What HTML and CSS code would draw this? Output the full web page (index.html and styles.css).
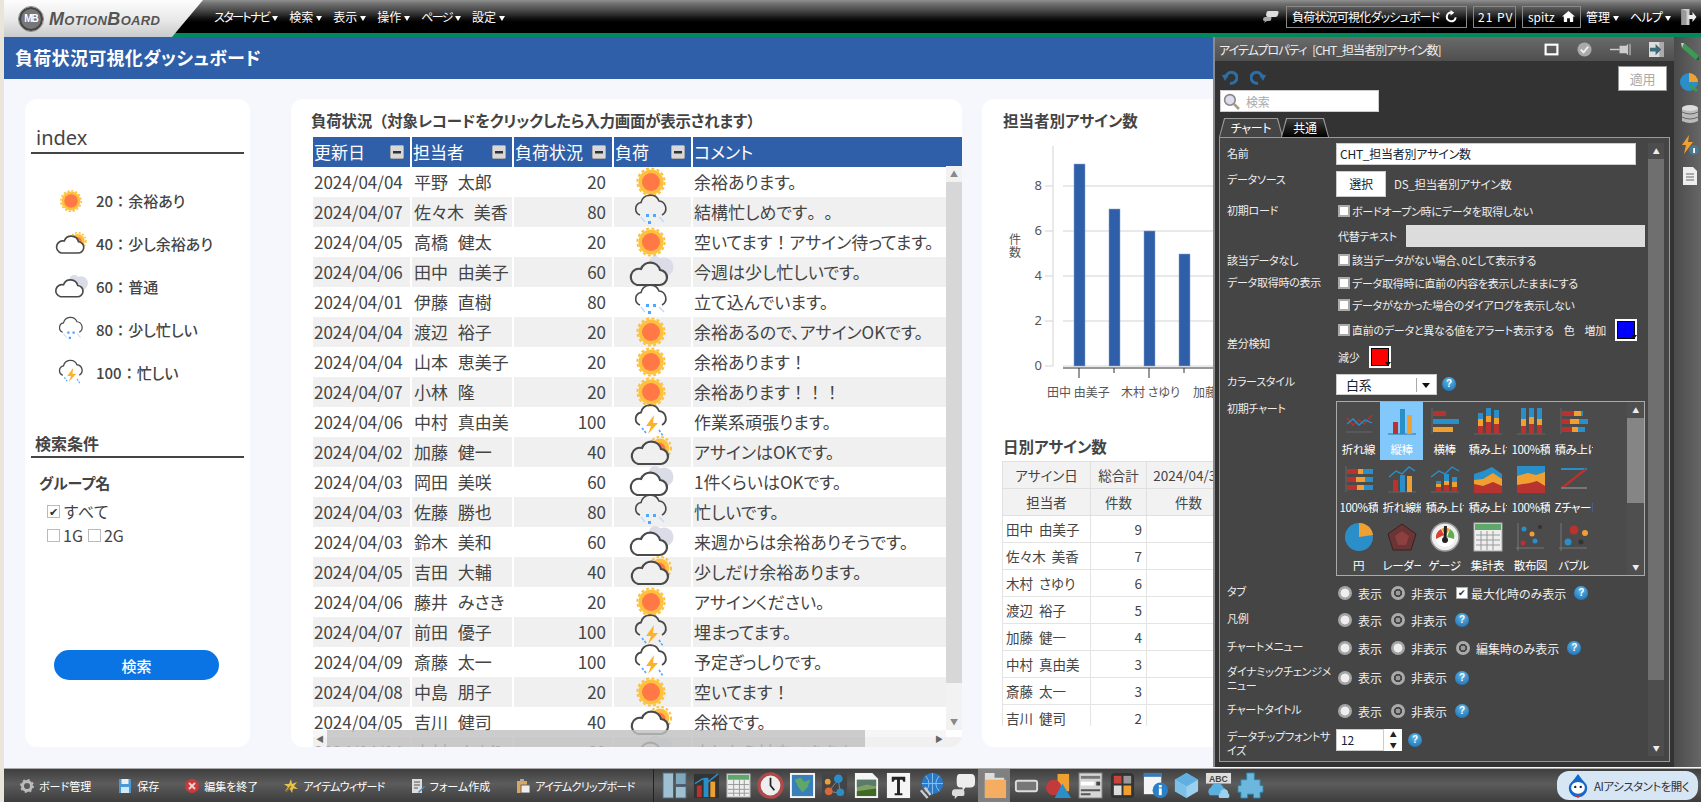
FILE: index.html
```html
<!DOCTYPE html>
<html lang="ja">
<head>
<meta charset="utf-8">
<title>負荷状況可視化ダッシュボード</title>
<link rel="stylesheet" href="styles.css">
</head>
<body>
<svg class="defs" aria-hidden="true">
  <defs>
    <symbol id="sun" viewBox="0 0 48 48"><circle cx="24" cy="24" r="12.6" fill="#fdc13f"/><circle cx="24" cy="24" r="13.6" fill="none" stroke="#fdc13f" stroke-width="2" stroke-dasharray="3 2.34"/><circle cx="24" cy="24" r="9" fill="#ff7845"/></symbol>
    <symbol id="partly" viewBox="0 0 48 48"><circle cx="33" cy="20" r="9.4" fill="#fdc13f"/><circle cx="33" cy="20" r="11" fill="none" stroke="#fdc13f" stroke-width="2" stroke-dasharray="2.6 2.2"/><circle cx="32" cy="21" r="6.4" fill="#ff7845"/><path d="M11 36H33A7.5 7.5 0 0 0 34 21A10 10 0 0 0 15 20A8 8 0 0 0 11 36Z" fill="currentColor" stroke="#4a4a4a" stroke-width="2.2"/></symbol>
    <symbol id="cloud" viewBox="0 0 48 48"><circle cx="37" cy="19" r="9.5" fill="#dadce8"/><circle cx="28" cy="14" r="6" fill="#dadce8"/><path d="M10 37H32A7.5 7.5 0 0 0 33 22A10 10 0 0 0 14 21A8 8 0 0 0 10 37Z" fill="currentColor" stroke="#4a4a4a" stroke-width="2.2"/></symbol>
    <symbol id="rain" viewBox="0 0 48 48"><path d="M13 27A6.5 6.5 0 0 1 14 14.500A9.500 9.500 0 0 1 32 13A7.500 7.500 0 0 1 35 27" fill="none" stroke="#4a4a4a" stroke-width="1.600"/><g fill="#4da6ff"><rect x="19" y="26" width="3" height="3"/><rect x="26" y="26" width="3" height="3"/><rect x="21" y="33" width="3" height="3"/></g><g stroke="#bcdcff" stroke-width="1.400"><path d="M14 29l4 5M32 29l5 5"/></g></symbol>
    <symbol id="storm" viewBox="0 0 48 48"><path d="M13 27A6.500 6.500 0 0 1 14 14.500A9.500 9.500 0 0 1 32 13A7.500 7.500 0 0 1 35 27" fill="none" stroke="#4a4a4a" stroke-width="1.800"/><path d="M27 17L19 28H24L21 36L31 25H26Z" fill="#fbb32c"/><g stroke="#4da6ff" stroke-width="1.600" stroke-dasharray="2.500 1.500"><path d="M15 30l4 5M32 32l4 6"/></g></symbol>
    <symbol id="minus" viewBox="0 0 14 14"><rect x=".5" y=".5" width="13" height="13" rx="1" fill="#d8d8d8" stroke="#aaa"/><rect x="3" y="6" width="8" height="2.500" fill="#333"/></symbol>
    <symbol id="t1" viewBox="0 0 30 30"><path d="M2 26H28" stroke="#666"/><path d="M3 12L9 19L15 14L20 18L28 9" fill="none" stroke="#b8322f" stroke-width="1.300"/><path d="M3 18L9 13L15 19L21 14L28 17" fill="none" stroke="#2a8fc8" stroke-width="1.300"/></symbol>
    <symbol id="t2" viewBox="0 0 30 30"><path d="M1 28H29" stroke="#2a6f9f"/><rect x="6" y="16" width="5" height="12" fill="#b8322f"/><rect x="13" y="3" width="5" height="25" fill="#2a8fc8"/><rect x="20" y="9" width="5" height="19" fill="#f0a030"/></symbol>
    <symbol id="t3" viewBox="0 0 30 30"><path d="M2 2V28" stroke="#666"/><rect x="3" y="5" width="13" height="5" fill="#b8322f"/><rect x="3" y="13" width="26" height="5" fill="#2a8fc8"/><rect x="3" y="21" width="20" height="5" fill="#f0a030"/></symbol>
    <symbol id="t4" viewBox="0 0 30 30"><path d="M1 28H29" stroke="#666"/><g fill="#b8322f"><rect x="5" y="20" width="5" height="8"/><rect x="13" y="16" width="5" height="12"/><rect x="21" y="18" width="5" height="10"/></g><g fill="#f0a030"><rect x="5" y="13" width="5" height="7"/><rect x="13" y="10" width="5" height="6"/><rect x="21" y="12" width="5" height="6"/></g><g fill="#2a8fc8"><rect x="5" y="7" width="5" height="6"/><rect x="13" y="2" width="5" height="8"/><rect x="21" y="4" width="5" height="8"/></g></symbol>
    <symbol id="t5" viewBox="0 0 30 30"><path d="M1 28H29" stroke="#666"/><g fill="#b8322f"><rect x="5" y="20" width="5" height="8"/><rect x="13" y="18" width="5" height="10"/><rect x="21" y="19" width="5" height="9"/></g><g fill="#f0a030"><rect x="5" y="13" width="5" height="7"/><rect x="13" y="11" width="5" height="7"/><rect x="21" y="13" width="5" height="6"/></g><g fill="#2a8fc8"><rect x="5" y="2" width="5" height="11"/><rect x="13" y="2" width="5" height="9"/><rect x="21" y="2" width="5" height="11"/></g></symbol>
    <symbol id="t6" viewBox="0 0 30 30"><path d="M2 2V28" stroke="#666"/><g fill="#b8322f"><rect x="3" y="5" width="12" height="5"/><rect x="3" y="13" width="8" height="5"/><rect x="3" y="21" width="10" height="5"/></g><g fill="#f0a030"><rect x="15" y="5" width="7" height="5"/><rect x="11" y="13" width="9" height="5"/><rect x="13" y="21" width="6" height="5"/></g><g fill="#2a8fc8"><rect x="20" y="13" width="9" height="5"/><rect x="19" y="21" width="7" height="5"/><rect x="22" y="5" width="2" height="5"/></g></symbol>
    <symbol id="t7" viewBox="0 0 30 30"><path d="M2 2V28" stroke="#666"/><g fill="#b8322f"><rect x="3" y="5" width="11" height="5"/><rect x="3" y="13" width="9" height="5"/><rect x="3" y="21" width="10" height="5"/></g><g fill="#f0a030"><rect x="14" y="5" width="5" height="5"/><rect x="12" y="13" width="9" height="5"/><rect x="13" y="21" width="7" height="5"/></g><g fill="#2a8fc8"><rect x="19" y="5" width="10" height="5"/><rect x="21" y="13" width="8" height="5"/><rect x="20" y="21" width="9" height="5"/></g></symbol>
    <symbol id="t8" viewBox="0 0 30 30"><path d="M1 28H29" stroke="#666"/><rect x="6" y="16" width="5" height="12" fill="#b8322f"/><rect x="13" y="11" width="5" height="17" fill="#2a8fc8"/><rect x="20" y="12" width="5" height="16" fill="#f0a030"/><path d="M2 13L9 7L15 10L22 3L28 7" fill="none" stroke="#2a8fc8" stroke-width="1.400"/></symbol>
    <symbol id="t9" viewBox="0 0 30 30"><path d="M1 28H29" stroke="#666"/><g fill="#b8322f"><rect x="6" y="23" width="5" height="5"/><rect x="14" y="21" width="5" height="7"/><rect x="22" y="23" width="5" height="5"/></g><g fill="#f0a030"><rect x="6" y="20" width="5" height="3"/><rect x="14" y="17" width="5" height="4"/><rect x="22" y="18" width="5" height="5"/></g><g fill="#2a8fc8"><rect x="6" y="17" width="5" height="3"/><rect x="14" y="10" width="5" height="7"/><rect x="22" y="13" width="5" height="5"/></g><path d="M1 13L9 7L15 10L22 3L29 7" fill="none" stroke="#2a8fc8" stroke-width="1.400"/></symbol>
    <symbol id="t10" viewBox="0 0 30 30"><path d="M1 10L10 7L19 3L29 10V18H1Z" fill="#2a8fc8"/><path d="M1 16L10 15L20 9L29 15V22H1Z" fill="#f0a030"/><path d="M1 20L10 22L20 18L29 22V29H1Z" fill="#b8322f"/></symbol>
    <symbol id="t11" viewBox="0 0 30 30"><rect x="1" y="2" width="28" height="27" fill="#2a8fc8"/><path d="M1 12L12 9L20 11L29 8V29H1Z" fill="#f0a030"/><path d="M1 21L14 19L21 17L29 22V29H1Z" fill="#b8322f"/></symbol>
    <symbol id="t12" viewBox="0 0 30 30"><path d="M2 5H28" stroke="#2a8fc8" stroke-width="2"/><path d="M27 5L3 24" stroke="#b8322f" stroke-width="2.400"/><path d="M2 24H28" stroke="#777" stroke-width="2"/></symbol>
    <symbol id="t13" viewBox="0 0 30 30"><circle cx="15" cy="15" r="14" fill="#2a8fc8"/><path d="M15 15V1A14 14 0 0 1 29 13Z" fill="#f0a030"/></symbol>
    <symbol id="t14" viewBox="0 0 30 30"><path d="M15 2L29 12L24 28H6L1 12Z" fill="#6b3535" stroke="#3a2020"/><path d="M15 9L22 14L19 23H11L8 14Z" fill="#8c4040"/></symbol>
    <symbol id="t15" viewBox="0 0 30 30"><circle cx="15" cy="15" r="14" fill="#eee" stroke="#999" stroke-width="1.500"/><circle cx="15" cy="15" r="10" fill="#fff"/><path d="M6 17A9 9 0 0 1 11 7L14 13Z" fill="#d8432f"/><path d="M11 7A9 9 0 0 1 20 7L16 13Z" fill="#f0a030"/><path d="M20 7A9 9 0 0 1 24 17L17 15Z" fill="#5fae4a"/><path d="M14 4L17 4L16.500 17H13.500Z" fill="#222"/><circle cx="15" cy="18" r="3" fill="#222"/></symbol>
    <symbol id="t16" viewBox="0 0 30 30"><rect x="1" y="1" width="28" height="28" fill="#eee" stroke="#aaa"/><rect x="2" y="2" width="26" height="6" fill="#5da86a"/><path d="M3 13H27M3 18H27M3 23H27M8 9V28M14 9V28M20 9V28" stroke="#999" fill="none"/></symbol>
    <symbol id="t17" viewBox="0 0 30 30"><path d="M2 1V29M0 26H28" stroke="#777"/><circle cx="8" cy="7" r="2.500" fill="#2a8fc8"/><circle cx="24" cy="5" r="2" fill="#333"/><circle cx="16" cy="12" r="2.500" fill="#f0a030"/><circle cx="7" cy="21" r="2.500" fill="#b8322f"/><circle cx="19" cy="19" r="2.500" fill="#2a8fc8"/></symbol>
    <symbol id="t18" viewBox="0 0 30 30"><path d="M2 1V29M0 26H28" stroke="#777"/><circle cx="15" cy="8" r="4.500" fill="#b8322f"/><circle cx="26" cy="11" r="3" fill="#f0a030"/><circle cx="9" cy="20" r="3.500" fill="#2a8fc8"/><circle cx="22" cy="20" r="2.500" fill="#333"/></symbol>
  </defs>
</svg>

<div class="app">
  <header class="topbar">
    <div class="logo">
      <span class="logo-mark">MB</span>
      <span class="logo-text"><span class="cap">M</span>OTION<span class="cap">B</span>OARD</span>
    </div>
    <nav class="menu">
      <span class="kana">スタートナビ<i class="caret"></i></span>
      <span>検索<i class="caret"></i></span>
      <span>表示<i class="caret"></i></span>
      <span>操作<i class="caret"></i></span>
      <span class="kana">ページ<i class="caret"></i></span>
      <span>設定<i class="caret"></i></span>
    </nav>
    <div class="top-right">
      <svg class="top-chat" viewBox="0 0 16 14"><path d="M5 1H14Q16 1 15.500 3L14.500 6Q14 7 12 7H7L4 9L5 7Q3 7 3 5L3.500 2.500Q4 1 5 1Z" fill="#ddd"/><path d="M2 7H8Q9 8 8 10Q8 11 6 11H4L1 13L2 11Q0 11 0 9.500Q0 7 2 7Z" fill="#aaa"/></svg>
      <div class="top-box board"><span class="board-name">負荷状況可視化ダッシュボード</span>
        <svg class="top-ic" viewBox="0 0 14 14"><path d="M11.500 8A4.800 4.800 0 1 1 7 2.600" fill="none" stroke="#fff" stroke-width="2.200"/><path d="M6 0V6L10 3Z" fill="#fff"/></svg>
      </div>
      <div class="top-box pv">21 PV</div>
      <div class="top-box user">spitz
        <svg class="top-ic" viewBox="0 0 14 14"><path d="M7 1L0 7H2V13H5.500V9H8.500V13H12V7H14Z" fill="#fff"/></svg>
      </div>
      <span class="top-link admin">管理<i class="caret"></i></span>
      <span class="top-link help-link">ヘルプ<i class="caret"></i></span>
      <svg class="top-exit" viewBox="0 0 16 18"><path d="M1 1H9V17H1Z" fill="#ccc"/><path d="M1 1L6 3V17H1Z" fill="#999"/><path d="M8 7H12V4L16 9L12 14V11H8Z" fill="#eee"/></svg>
    </div>
  </header>

  <div class="workspace">
    <h1 class="page-title">負荷状況可視化ダッシュボード</h1>
    <main class="content">
      <aside class="card side">
        <h2 class="side-title">index</h2>
        <ul class="legend">
          <li><svg class="legend-ic"><use href="#sun"/></svg><span>20<span class="fw">&#xFF1A;</span>余裕あり</span></li>
          <li><svg class="legend-ic"><use href="#partly"/></svg><span>40<span class="fw">&#xFF1A;</span>少し余裕あり</span></li>
          <li><svg class="legend-ic"><use href="#cloud"/></svg><span>60<span class="fw">&#xFF1A;</span>普通</span></li>
          <li><svg class="legend-ic"><use href="#rain"/></svg><span>80<span class="fw">&#xFF1A;</span>少し忙しい</span></li>
          <li><svg class="legend-ic"><use href="#storm"/></svg><span>100<span class="fw">&#xFF1A;</span>忙しい</span></li>
        </ul>
        <h3 class="cond-title">検索条件</h3>
        <div class="group-name">グループ名</div>
        <div class="opt-row"><span class="tick">✔</span>すべて</div>
        <div class="opt-row"><span class="tick"></span>1G<span class="tick second"></span>2G</div>
        <button class="search-btn">検索</button>
      </aside>

      <section class="card list">
        <h3 class="card-title">負荷状況<span class="fw">&#xFF08;</span>対象レコードをクリックしたら入力画面が表示されます<span class="fw">&#xFF09;</span></h3>
        <div class="table-wrap">
          <table class="load-table">
            <colgroup><col class="c1"><col class="c2"><col class="c3"><col class="c4"><col class="c5"></colgroup>
            <thead>
              <tr>
                <th>更新日<svg class="mini"><use href="#minus"/></svg></th>
                <th>担当者<svg class="mini"><use href="#minus"/></svg></th>
                <th>負荷状況<svg class="mini"><use href="#minus"/></svg></th>
                <th>負荷<svg class="mini"><use href="#minus"/></svg></th>
                <th>コメント</th>
              </tr>
            </thead>
            <tbody>
              <tr><td>2024/04/04</td><td class="nm">平野 太郎</td><td class="num">20</td><td><svg class="wx"><use href="#sun"/></svg></td><td class="cm">余裕あります。</td></tr>
              <tr><td>2024/04/07</td><td class="nm">佐々木 美香</td><td class="num">80</td><td><svg class="wx"><use href="#rain"/></svg></td><td class="cm">結構忙しめです<span class="fw">。。</span></td></tr>
              <tr><td>2024/04/05</td><td class="nm">高橋 健太</td><td class="num">20</td><td><svg class="wx"><use href="#sun"/></svg></td><td class="cm">空いてます<span class="fw">&#xFF01;</span>アサイン待ってます。</td></tr>
              <tr><td>2024/04/06</td><td class="nm">田中 由美子</td><td class="num">60</td><td><svg class="wx"><use href="#cloud"/></svg></td><td class="cm">今週は少し忙しいです。</td></tr>
              <tr><td>2024/04/01</td><td class="nm">伊藤 直樹</td><td class="num">80</td><td><svg class="wx"><use href="#rain"/></svg></td><td class="cm">立て込んでいます。</td></tr>
              <tr><td>2024/04/04</td><td class="nm">渡辺 裕子</td><td class="num">20</td><td><svg class="wx"><use href="#sun"/></svg></td><td class="cm">余裕あるので、アサインOKです。</td></tr>
              <tr><td>2024/04/04</td><td class="nm">山本 恵美子</td><td class="num">20</td><td><svg class="wx"><use href="#sun"/></svg></td><td class="cm">余裕あります<span class="fw">&#xFF01;</span></td></tr>
              <tr><td>2024/04/07</td><td class="nm">小林 隆</td><td class="num">20</td><td><svg class="wx"><use href="#sun"/></svg></td><td class="cm">余裕あります<span class="fw">&#xFF01;&#xFF01;&#xFF01;</span></td></tr>
              <tr><td>2024/04/06</td><td class="nm">中村 真由美</td><td class="num">100</td><td><svg class="wx"><use href="#storm"/></svg></td><td class="cm">作業系頑張ります。</td></tr>
              <tr><td>2024/04/02</td><td class="nm">加藤 健一</td><td class="num">40</td><td><svg class="wx"><use href="#partly"/></svg></td><td class="cm">アサインはOKです。</td></tr>
              <tr><td>2024/04/03</td><td class="nm">岡田 美咲</td><td class="num">60</td><td><svg class="wx"><use href="#cloud"/></svg></td><td class="cm">1件くらいはOKです。</td></tr>
              <tr><td>2024/04/03</td><td class="nm">佐藤 勝也</td><td class="num">80</td><td><svg class="wx"><use href="#rain"/></svg></td><td class="cm">忙しいです。</td></tr>
              <tr><td>2024/04/03</td><td class="nm">鈴木 美和</td><td class="num">60</td><td><svg class="wx"><use href="#cloud"/></svg></td><td class="cm">来週からは余裕ありそうです。</td></tr>
              <tr><td>2024/04/05</td><td class="nm">吉田 大輔</td><td class="num">40</td><td><svg class="wx"><use href="#partly"/></svg></td><td class="cm">少しだけ余裕あります。</td></tr>
              <tr><td>2024/04/06</td><td class="nm">藤井 みさき</td><td class="num">20</td><td><svg class="wx"><use href="#sun"/></svg></td><td class="cm">アサインください。</td></tr>
              <tr><td>2024/04/07</td><td class="nm">前田 優子</td><td class="num">100</td><td><svg class="wx"><use href="#storm"/></svg></td><td class="cm">埋まってます。</td></tr>
              <tr><td>2024/04/09</td><td class="nm">斎藤 太一</td><td class="num">100</td><td><svg class="wx"><use href="#storm"/></svg></td><td class="cm">予定ぎっしりです。</td></tr>
              <tr><td>2024/04/08</td><td class="nm">中島 朋子</td><td class="num">20</td><td><svg class="wx"><use href="#sun"/></svg></td><td class="cm">空いてます<span class="fw">&#xFF01;</span></td></tr>
              <tr><td>2024/04/05</td><td class="nm">吉川 健司</td><td class="num">40</td><td><svg class="wx"><use href="#partly"/></svg></td><td class="cm">余裕です。</td></tr>
              <tr><td>2024/04/04</td><td class="nm">木村 さゆり</td><td class="num">60</td><td><svg class="wx"><use href="#cloud"/></svg></td><td class="cm">少しなら対応できます。</td></tr>
            </tbody>
          </table>
          <div class="vbar"><span class="vbar-up">▲</span><span class="vbar-thumb"></span><span class="vbar-down">▼</span></div>
          <div class="hbar"><span class="hbar-l">◀</span><span class="hbar-thumb"></span><span class="hbar-r">▶</span></div>
        </div>
      </section>

      <section class="card right">
        <h3 class="card-title chart-head">担当者別アサイン数</h3>
        <svg class="bar-chart" viewBox="0 0 260 270">
          <g class="grid-lines"><path d="M61 17V237"/><path d="M53 237H61M53 192H61M53 147H61M53 102H61M53 57H61"/><path d="M71 237H260M71 192H260M71 147H260M71 102H260M71 57H260"/></g>
          <g class="ytext"><text x="50" y="241">0</text><text x="50" y="196">2</text><text x="50" y="151">4</text><text x="50" y="106">6</text><text x="50" y="61">8</text></g>
          <text class="axis-name" x="23" y="115">件</text><text class="axis-name" x="23" y="128">数</text>
          <g class="bars"><rect x="82" y="35" width="11" height="202"/><rect x="117" y="80" width="11" height="157"/><rect x="152" y="102" width="11" height="135"/><rect x="187" y="125" width="11" height="112"/><rect x="222" y="147" width="11" height="90"/></g>
          <path class="x-axis" d="M71 239H260M87 239V249M122 239V244M157 239V249M192 239V244M227 239V249"/>
          <g class="xtext"><text x="55" y="268">田中 由美子</text><text x="129" y="268">木村 さゆり</text><text x="201" y="268">加藤 健一</text></g>
        </svg>
        <h3 class="card-title daily-head">日別アサイン数</h3>
        <div class="pivot-wrap">
          <table class="pivot">
            <colgroup><col class="p1"><col class="p2"><col class="p3"><col class="p4"></colgroup>
            <thead>
              <tr><th>アサイン日</th><th>総合計</th><th>2024/04/30</th><th>2024/05/01</th></tr>
              <tr><th>担当者</th><th>件数</th><th>件数</th><th>件数</th></tr>
            </thead>
            <tbody>
              <tr><td>田中 由美子</td><td class="pn">9</td><td></td><td></td></tr>
              <tr><td>佐々木 美香</td><td class="pn">7</td><td></td><td></td></tr>
              <tr><td>木村 さゆり</td><td class="pn">6</td><td></td><td></td></tr>
              <tr><td>渡辺 裕子</td><td class="pn">5</td><td></td><td></td></tr>
              <tr><td>加藤 健一</td><td class="pn">4</td><td></td><td></td></tr>
              <tr><td>中村 真由美</td><td class="pn">3</td><td></td><td></td></tr>
              <tr><td>斎藤 太一</td><td class="pn">3</td><td></td><td></td></tr>
              <tr><td>吉川 健司</td><td class="pn">2</td><td></td><td></td></tr>
            </tbody>
          </table>
        </div>
      </section>
    </main>

    <aside class="panel">
      <div class="panel-title">
        <span class="panel-name">アイテムプロパティ [CHT_担当者別アサイン数]</span>
        <span class="panel-icons">
          <svg class="pt" viewBox="0 0 14 14"><rect x="1.500" y="2.500" width="11" height="9" fill="none" stroke="#fff" stroke-width="2"/></svg>
          <svg class="pt" viewBox="0 0 16 16"><circle cx="8" cy="8" r="7.500" fill="#aaa"/><path d="M4 8L7 11L12 5" fill="none" stroke="#eee" stroke-width="2"/></svg>
          <svg class="pt wide" viewBox="0 0 22 14"><path d="M0 7H10" stroke="#ccc" stroke-width="1.500"/><path d="M10 3H17L19 1V13L17 11H10Z" fill="#ccc"/><rect x="20" y="1" width="2" height="12" fill="#999"/></svg>
          <svg class="pt" viewBox="0 0 16 16"><rect x="0" y="0" width="16" height="16" fill="#ddd"/><rect x="11" y="0" width="5" height="16" fill="#aaa"/><path d="M1 6H7V2L13 8L7 14V10H1Z" fill="#3c6a78"/></svg>
        </span>
      </div>
      <div class="panel-tools">
        <div class="tools-row">
          <svg class="undo" viewBox="0 0 16 16"><path d="M4 9A5.500 5.500 0 1 1 8 14" fill="none" stroke="#2c6fa8" stroke-width="3"/><path d="M0 6L7 5L3 12Z" fill="#2c6fa8"/></svg>
          <svg class="undo" viewBox="0 0 16 16"><path d="M12 9A5.500 5.500 0 1 0 8 14" fill="none" stroke="#2c6fa8" stroke-width="3"/><path d="M16 6L9 5L13 12Z" fill="#2c6fa8"/></svg>
          <span class="apply">適用</span>
        </div>
        <div class="search-box">
          <svg class="lens" viewBox="0 0 16 16"><circle cx="6.500" cy="6.500" r="5" fill="#dde" stroke="#888" stroke-width="1.500"/><path d="M10 10L15 15" stroke="#a98" stroke-width="2.500"/></svg>検索
        </div>
      </div>
      <div class="tabs">
        <span class="tab active">チャート</span>
        <span class="tab other">共通</span>
      </div>
      <div class="prop-box">
        <div class="props">
          <div class="lb up8">名前</div>
          <div class="val start"><span class="in name-in">CHT_担当者別アサイン数</span></div>
          <div class="lb up12">データソース</div>
          <div class="val start"><span class="sel-btn">選択</span><span class="ds">DS_担当者別アサイン数</span></div>
          <div class="lb">初期ロード</div>
          <div class="val ck"><i class="box"></i>ボードオープン時にデータを取得しない</div>
          <div class="lb"></div>
          <div class="val ck alt">代替テキスト<span class="alt-in"></span></div>
          <div class="lb">該当データなし</div>
          <div class="val ck"><i class="box"></i>該当データがない場合、0として表示する</div>
          <div class="lb">データ取得時の表示</div>
          <div class="val ck"><i class="box"></i>データ取得時に直前の内容を表示したままにする</div>
          <div class="lb"></div>
          <div class="val ck"><i class="box"></i>データがなかった場合のダイアログを表示しない</div>
          <div class="lb">差分検知</div>
          <div class="val diff">
            <div class="ck"><i class="box"></i>直前のデータと異なる値をアラート表示する<span class="diff-color">色</span><span class="diff-inc">増加</span><i class="swatch blue"></i></div>
            <div class="ck dec">減少<i class="swatch red"></i></div>
          </div>
          <div class="lb up6">カラースタイル</div>
          <div class="val"><span class="select">白系<i class="sel-arrow"></i></span><i class="help sel-help">?</i></div>
          <div class="lb top">初期チャート</div>
          <div class="val">
            <div class="gallery">
              <div class="gal-grid">
                <div class="gc"><svg><use href="#t1"/></svg><span>折れ線</span></div>
                <div class="gc sel"><svg><use href="#t2"/></svg><span>縦棒</span></div>
                <div class="gc"><svg><use href="#t3"/></svg><span>横棒</span></div>
                <div class="gc"><svg><use href="#t4"/></svg><span>積み上げ縦棒</span></div>
                <div class="gc"><svg><use href="#t5"/></svg><span>100%積み上げ</span></div>
                <div class="gc"><svg><use href="#t6"/></svg><span>積み上げ横棒</span></div>
                <div class="gc"><svg><use href="#t7"/></svg><span>100%積み上げ</span></div>
                <div class="gc"><svg><use href="#t8"/></svg><span>折れ線縦棒</span></div>
                <div class="gc"><svg><use href="#t9"/></svg><span>積み上げ折れ線</span></div>
                <div class="gc"><svg><use href="#t10"/></svg><span>積み上げ面</span></div>
                <div class="gc"><svg><use href="#t11"/></svg><span>100%積み上げ</span></div>
                <div class="gc"><svg><use href="#t12"/></svg><span>Zチャート</span></div>
                <div class="gc"><svg><use href="#t13"/></svg><span>円</span></div>
                <div class="gc"><svg><use href="#t14"/></svg><span>レーダー</span></div>
                <div class="gc"><svg><use href="#t15"/></svg><span>ゲージ</span></div>
                <div class="gc"><svg><use href="#t16"/></svg><span>集計表</span></div>
                <div class="gc"><svg><use href="#t17"/></svg><span>散布図</span></div>
                <div class="gc"><svg><use href="#t18"/></svg><span>バブル</span></div>
              </div>
              <div class="gal-bar"><span class="sb-a">▲</span><span class="gal-thumb"></span><span class="sb-a end">▼</span></div>
            </div>
          </div>
          <div class="lb">タブ</div>
          <div class="val rd"><i class="radio on"></i>表示<i class="radio"></i>非表示<i class="box checked">✔</i>最大化時のみ表示<i class="help">?</i></div>
          <div class="lb">凡例</div>
          <div class="val rd"><i class="radio on"></i>表示<i class="radio"></i>非表示<i class="help">?</i></div>
          <div class="lb">チャートメニュー</div>
          <div class="val rd"><i class="radio on"></i>表示<i class="radio on"></i>非表示<i class="radio"></i>編集時のみ表示<i class="help">?</i></div>
          <div class="lb tight">ダイナミックチェンジメ<br>ニュー</div>
          <div class="val rd rd-up"><i class="radio on"></i>表示<i class="radio"></i>非表示<i class="help">?</i></div>
          <div class="lb">チャートタイトル</div>
          <div class="val rd"><i class="radio on"></i>表示<i class="radio"></i>非表示<i class="help">?</i></div>
          <div class="lb tight low">データチップフォントサ<br>イズ</div>
          <div class="val"><span class="spin-in">12</span><span class="spin"><b>▲</b><b>▼</b></span><i class="help">?</i></div>
        </div>
        <div class="prop-bar"><span class="sb-a">▲</span><span class="prop-thumb"></span><span class="sb-a end">▼</span></div>
      </div>
    </aside>

    <div class="rail">
      <svg viewBox="0 0 20 20"><path d="M4 1L19 14L16 18L2 6Z" fill="#3d9a55"/><path d="M1 1L4 1L2 6Z" fill="#ccc"/><path d="M16 18L19 14L19 18Z" fill="#1f5c30"/></svg>
      <svg viewBox="0 0 20 20"><circle cx="9" cy="9" r="9" fill="#2a8fc8"/><path d="M9 9V0A9 9 0 0 1 18 9Z" fill="#f0a030"/><path d="M10 11L18 17L16 19L9 13Z" fill="#3d9a55"/></svg>
      <svg viewBox="0 0 20 20"><path d="M2 4V17Q10 21 18 17V4" fill="#bbb"/><ellipse cx="10" cy="4" rx="8" ry="3" fill="#ddd"/><path d="M2 8Q10 12 18 8M2 13Q10 17 18 13" fill="none" stroke="#666"/></svg>
      <svg viewBox="0 0 20 20"><path d="M9 0L2 10H6L4 19L13 7H8Z" fill="#f0a030"/><circle cx="14" cy="15" r="5" fill="#4a7a90"/><rect x="13.200" y="13" width="1.800" height="5" fill="#fff"/></svg>
      <svg viewBox="0 0 20 20"><path d="M3 1H13L17 5V19H3Z" fill="#eee"/><path d="M6 8H14M6 11H14M6 14H14" stroke="#666"/></svg>
    </div>
  </div>

  <footer class="bottombar">
    <div class="bb-left">
      <span class="bb-btn first"><svg viewBox="0 0 14 14"><circle cx="7" cy="7" r="4.500" fill="none" stroke="#bbb" stroke-width="3"/><circle cx="7" cy="7" r="6" fill="none" stroke="#bbb" stroke-width="2" stroke-dasharray="2 2.700"/></svg>ボード管理</span>
      <span class="bb-btn"><svg viewBox="0 0 14 14"><rect x="1" y="0" width="12" height="14" fill="#4a9ad8"/><rect x="3.500" y="0" width="7" height="5" fill="#eee"/><rect x="3" y="8" width="8" height="6" fill="#d5e8f5"/></svg>保存</span>
      <span class="bb-btn"><svg viewBox="0 0 14 14"><circle cx="7" cy="7" r="7" fill="#c8393a"/><path d="M4 4L10 10M10 4L4 10" stroke="#f3d0d0" stroke-width="2"/></svg>編集を終了</span>
      <span class="bb-btn narrow"><svg viewBox="0 0 14 14"><path d="M7 0L8 5L13 3L10 7L14 10L9 9.500L8 14L6 10L1 12L4 8L0 5L5 5Z" fill="#e8c44a"/><path d="M2 13L7 7" stroke="#8a6a20" stroke-width="1.500"/></svg>アイテムウィザード</span>
      <span class="bb-btn"><svg viewBox="0 0 14 14"><rect x="1" y="0" width="10" height="14" fill="#ddd"/><path d="M3 3H9M3 6H9M3 9H7" stroke="#555"/><path d="M7 13L13 7L14 8L8 14Z" fill="#3d8fc8"/></svg>フォーム作成</span>
      <span class="bb-btn narrow"><svg viewBox="0 0 14 14"><rect x="1" y="2" width="10" height="12" fill="#d8a860"/><rect x="4" y="0" width="4" height="3" fill="#aaa"/><rect x="5" y="6" width="9" height="8" fill="#eee" stroke="#666"/></svg>アイテムクリップボード</span>
    </div>
    <div class="bb-icons">
      <span class="bi"><svg viewBox="0 0 28 28"><rect x="2" y="1" width="11" height="26" fill="#9fc0d0" stroke="#506070"/><rect x="15" y="1" width="11" height="12" fill="#7fa8bc" stroke="#506070"/><rect x="15" y="15" width="11" height="12" fill="#9fc0d0" stroke="#506070"/></svg></span>
      <span class="bi"><svg viewBox="0 0 28 28"><rect x="1" y="2" width="26" height="25" fill="#333"/><rect x="4" y="14" width="5" height="12" fill="#b8322f"/><rect x="11" y="6" width="5" height="20" fill="#2a8fc8"/><rect x="18" y="10" width="5" height="16" fill="#f0a030"/><path d="M2 12L10 7L16 10L26 2" fill="none" stroke="#2a8fc8" stroke-width="1.500"/></svg></span>
      <span class="bi"><svg viewBox="0 0 28 28"><rect x="2" y="2" width="24" height="24" fill="#eee" stroke="#aaa"/><rect x="3" y="3" width="22" height="5" fill="#5da86a"/><path d="M3 13H25M3 18H25M3 22H25M9 8V25M15 8V25M20 8V25" stroke="#999" fill="none"/></svg></span>
      <span class="bi"><svg viewBox="0 0 28 28"><circle cx="14" cy="14" r="12" fill="#eee" stroke="#b04a4a" stroke-width="3.500"/><path d="M14 6V14L18 19" fill="none" stroke="#222" stroke-width="1.800"/></svg></span>
      <span class="bi"><svg viewBox="0 0 28 28"><rect x="1" y="1" width="26" height="26" fill="#f5f5f5"/><rect x="3" y="3" width="22" height="22" fill="#3a80b8"/><path d="M6 8L12 6L16 10L22 8L19 16L14 21L10 16Z" fill="#5fa86a"/></svg></span>
      <span class="bi"><svg viewBox="0 0 28 28"><rect x="1" y="2" width="26" height="25" fill="#444"/><path d="M8 20L18 8M8 20L20 22M18 8L20 22" stroke="#888"/><circle cx="8" cy="20" r="4" fill="#d86a3a"/><circle cx="18" cy="7" r="4.500" fill="#2a8fc8"/><circle cx="20" cy="21" r="4" fill="#2a8fc8"/><circle cx="7" cy="10" r="3" fill="#f0a030"/></svg></span>
      <span class="bi"><svg viewBox="0 0 28 28"><path d="M2 1H20L26 7V27H2Z" fill="#f5f5f5"/><rect x="4" y="8" width="20" height="17" fill="#7fa060"/><path d="M4 8H24V15L14 13L4 16Z" fill="#5a7a6a"/><path d="M4 20L24 17V25H4Z" fill="#3f6a25"/></svg></span>
      <span class="bi"><svg viewBox="0 0 28 28"><rect x="2" y="1" width="24" height="26" fill="#f5f5f5"/><path d="M7 5H21V10H19L18 8H15.500V22H18V24H10V22H12.500V8H10L9 10H7Z" fill="#222"/></svg></span>
      <span class="bi"><svg viewBox="0 0 28 28"><circle cx="16" cy="12" r="11" fill="#2a78c8"/><path d="M5 12H27M16 1V23M9 4Q16 12 9 20M23 4Q16 12 23 20" fill="none" stroke="#8cc4ee"/><path d="M4 19L11 27M8 16L14 24" stroke="#ccc" stroke-width="2.500"/></svg></span>
      <span class="bi"><svg viewBox="0 0 28 28"><path d="M11 2H23Q27 2 27 7V11Q27 16 23 16H17L14 20V16H11Q8 16 8 11V7Q8 2 11 2Z" fill="#eee"/><path d="M6 18H13Q16 18 16 21V23Q16 25 13 25H9L6 28V25Q3 25 3 22Q3 18 6 18Z" fill="#ddd"/></svg></span>
      <span class="bi current"><svg viewBox="0 0 28 28"><path d="M4 1H14V6H24V27H4Z" fill="#ddd"/><rect x="4" y="8" width="22" height="19" fill="#f5ad62"/></svg></span>
      <span class="bi"><svg viewBox="0 0 28 28"><rect x="2" y="8" width="24" height="13" rx="3" fill="#ddd"/><rect x="4" y="10" width="20" height="9" rx="1" fill="#777"/></svg></span>
      <span class="bi"><svg viewBox="0 0 28 28"><rect x="13" y="2" width="12" height="18" fill="#f0a030"/><circle cx="9" cy="16" r="8" fill="#c23a3a"/><path d="M18 12L27 27H10Z" fill="#2a8fc8"/></svg></span>
      <span class="bi"><svg viewBox="0 0 28 28"><rect x="2" y="1" width="24" height="26" fill="#d5d5d5" stroke="#777"/><rect x="4" y="4" width="20" height="3" fill="#777"/><rect x="4" y="10" width="14" height="4" fill="#fff"/><rect x="20" y="10" width="4" height="4" fill="#444"/><path d="M4 19H24M4 23H14" stroke="#555" stroke-width="2"/></svg></span>
      <span class="bi"><svg viewBox="0 0 28 28"><rect x="2" y="1" width="24" height="26" rx="4" fill="#333"/><rect x="5" y="4" width="8" height="8" fill="#c8433a"/><rect x="15" y="4" width="8" height="8" fill="#999"/><rect x="5" y="14" width="8" height="10" fill="#ddd"/><rect x="15" y="14" width="8" height="10" fill="#f0a030"/></svg></span>
      <span class="bi"><svg viewBox="0 0 28 28"><rect x="3" y="1" width="18" height="22" fill="#f5f5f5"/><rect x="3" y="1" width="18" height="4" fill="#3a7ab8"/><circle cx="20" cy="19" r="8" fill="#2a80c8"/><rect x="18.500" y="17" width="3" height="7" fill="#fff"/><rect x="18.500" y="13.500" width="3" height="2.500" fill="#fff"/></svg></span>
      <span class="bi"><svg viewBox="0 0 28 28"><path d="M14 1L26 8V20L14 27L2 20V8Z" fill="#9cd0ee"/><path d="M14 1L26 8L14 15L2 8Z" fill="#5fb0e0"/><path d="M14 15V27L2 20V8Z" fill="#7cc0e8"/></svg></span>
      <span class="bi"><svg viewBox="0 0 28 28"><rect x="1" y="1" width="26" height="11" fill="#ddd"/><text class="abc" x="14" y="10">ABC</text><path d="M5 24A5 5 0 0 1 6 16A7 7 0 0 1 19 16A5 5 0 0 1 21 24Z" fill="#5cb0e0"/><path d="M15 27A3 3 0 0 1 16 22A4 4 0 0 1 24 22A3 3 0 0 1 24 27Z" fill="#9cd0ee"/></svg></span>
      <span class="bi"><svg viewBox="0 0 28 28"><path d="M10 1H18V8H24V14H27V21H24V27H17V23H11V27H4V21H1V14H4V8H10Z" fill="#6cb8dc" stroke="#2f80a8"/></svg></span>
    </div>
    <button class="ai-btn">
      <svg viewBox="0 0 24 26"><path d="M12 0Q16 6 21 11A10 10 0 1 1 3 11Q8 6 12 0Z" fill="#1668c8"/><ellipse cx="12" cy="15" rx="7.500" ry="6.500" fill="#fff"/><circle cx="9" cy="14" r="1.300" fill="#222"/><circle cx="15" cy="14" r="1.300" fill="#222"/><path d="M8 23L12 26L16 23Z" fill="#c8333a"/></svg>
      AIアシスタントを開く
    </button>
  </footer>
</div>
</body>
</html>
```
FILE: styles.css
```css
* { box-sizing: border-box; }
html, body { margin: 0; height: 100%; }
body {
  width: 1701px; height: 802px; overflow: hidden; background: #e9e5d8;
  font-family: "Noto Sans CJK JP", "Noto Sans", sans-serif;
  font-feature-settings: "palt";
  text-spacing-trim: space-all;
  color: #444;
}
i, b { font-style: normal; font-weight: normal; }
h1, h2, h3, ul { margin: 0; padding: 0; }
.fw { font-feature-settings: normal; }
.defs { position: absolute; width: 0; height: 0; }
.app { margin-left: 4px; height: 802px; display: flex; flex-direction: column; }

/* top bar */
.topbar {
  height: 37px; flex: none; display: flex; align-items: flex-start; color: #fff;
  background: linear-gradient(#909090 0, #707070 10%, #505050 25%, #2c2c2c 40%, #111 50%, #000 60%, #000 88%, #008a5c 89%, #008a5c 100%);
}
.logo {
  width: 199px; height: 37px; flex: none; display: flex; align-items: center; padding: 0 0 0 15px; gap: 6px;
  clip-path: polygon(0 0, 100% 0, 168px 100%, 0 100%);
  background: linear-gradient(#fdfdfd, #e8e8e8 55%, #c9cacc);
}
.logo-mark {
  width: 24px; height: 24px; border-radius: 50%; background: #777; border: 2px solid #444; outline: 1px solid #888;
  color: #fff; font: bold 10px/20px "Liberation Sans", sans-serif; text-align: center; letter-spacing: -1px;
}
.logo-text { font: italic bold 13px/1 "Liberation Sans", sans-serif; color: #555; letter-spacing: .35px; white-space: nowrap; }
.cap { font-size: 18px; }
.menu { display: flex; gap: 11px; margin-left: 11px; font-size: 12px; line-height: 34px; white-space: nowrap; }
.menu .kana { letter-spacing: -1.600px; }
.caret {
  display: inline-block; width: 0; height: 0; margin-left: 3px; vertical-align: 1px;
  border-left: 3px solid transparent; border-right: 3px solid transparent; border-top: 5px solid #fff; letter-spacing: 0;
}
.top-right { margin-left: auto; display: flex; align-items: center; height: 33px; padding-right: 4px; font-size: 12px; white-space: nowrap; }
.top-chat { width: 16px; height: 14px; margin-right: 7px; flex: none; }
.top-box { height: 22px; border: 1px solid #888; display: flex; align-items: center; justify-content: space-between; padding: 0 5px; margin-right: 6px; flex: none; }
.top-box.board { width: 181px; padding-right: 8px; }
.board-name { letter-spacing: -.8px; }
.top-box.pv { width: 43px; letter-spacing: 1px; padding: 0 4px; }
.top-box.user { width: 59px; margin-right: 5px; }
.top-ic { width: 13px; height: 13px; flex: none; }
.top-link { flex: none; }
.top-link.admin { width: 34px; margin-right: 10px; }
.top-link.help-link { width: 37px; margin-right: 13px; letter-spacing: -.8px; }
.top-exit { width: 17px; height: 18px; flex: none; }

/* workspace */
.workspace { flex: 1; min-height: 0; position: relative; display: flex; flex-direction: column; overflow: hidden; }
.page-title { height: 42px; flex: none; background: #2f5fa9; color: #fff; font-size: 18px; letter-spacing: .3px; line-height: 40px; font-weight: 700; padding-left: 11px; }
.content { flex: 1; min-height: 0; background: #f5f7fc; display: flex; padding: 20px 0 0 21px; overflow: hidden; }
.card { flex: none; height: 648px; background: #fff; border-radius: 12px; overflow: hidden; }

/* index card */
.side { width: 225px; padding: 0 6px; position: relative; }
.side-title { font: 400 20px/30px "Noto Sans", sans-serif; color: #444; padding: 24px 0 0 5px; height: 55px; border-bottom: 2px solid #444; }
.legend { list-style: none; margin-top: 25px; }
.legend li { height: 43px; display: flex; align-items: center; gap: 7px; padding-left: 22px; font-size: 15px; font-weight: 500; color: #444; white-space: nowrap; }
.legend-ic { width: 36px; height: 36px; color: #fff; flex: none; }
.cond-title { margin-top: 33px; height: 31px; border-bottom: 2px solid #444; font-size: 16px; line-height: 32px; font-weight: 700; padding-left: 4px; }
.group-name { margin: 14px 0 0 8px; font-size: 15px; line-height: 22px; font-weight: 700; }
.opt-row { margin: 7px 0 0 16px; height: 20px; display: flex; align-items: center; font-size: 16px; line-height: 20px; font-feature-settings: normal; }
.opt-row + .opt-row { margin-top: 4px; }
.tick { width: 13px; height: 13px; border: 1px solid #bbb; margin-right: 3px; font-size: 11px; line-height: 11px; text-align: center; color: #333; background: #fff; }
.tick.second { margin-left: 5px; }
.search-btn {
  position: absolute; left: 29px; top: 551px; width: 165px; height: 30px; border: 0; border-radius: 15px; background: #0b74e5;
  color: #fff; font: 500 15px/30px "Noto Sans CJK JP", sans-serif;
}

/* list card */
.list { width: 671px; margin-left: 41px; padding-left: 22px; }
.card-title { font-size: 15.500px; line-height: 22px; font-weight: 700; color: #444; white-space: nowrap; }
.list .card-title { height: 38px; padding: 10px 0 0; margin-left: -2px; line-height: 22px; letter-spacing: -.25px; }
.table-wrap { position: relative; width: 649px; height: 610px; overflow: hidden; }
.load-table { border-collapse: collapse; table-layout: fixed; width: 649px; font-size: 17px; color: #444; }
.c1 { width: 98px; } .c2 { width: 102px; } .c3 { width: 100px; } .c4 { width: 79px; } .c5 { width: 270px; }
.load-table th {
  height: 30px; padding: 0 0 0 1px; background: #2f5fa9; color: #fff; text-align: left; font-weight: 400; line-height: 30px;
  border-right: 2px solid #fff; position: relative; white-space: nowrap;
}
.load-table th:last-child { border-right: 0; }
.mini { position: absolute; right: 6px; top: 8px; width: 14px; height: 14px; }
.load-table td { height: 30px; padding: 0 0 0 1px; line-height: 30px; border-right: 2px solid #fff; white-space: nowrap; overflow: visible; color: #444; }
.load-table td:last-child { border-right: 0; }
.load-table tbody tr:nth-child(even) td { background: #f0f0f0; }
.load-table .nm { padding-left: 2px; word-spacing: 6px; }
.load-table .num { text-align: right; padding-right: 6px; }
.load-table .cm { padding-left: 1px; }
.wx { display: block; width: 48px; height: 48px; margin: -9px 0 -9px 12px; position: relative; color: #fff; }
.load-table tbody tr:nth-child(even) .wx { color: #f0f0f0; }
.vbar { position: absolute; right: 0; top: 29px; bottom: 17px; width: 16px; background: #f2f2f2; display: flex; flex-direction: column; font-size: 8px; color: #888; text-align: center; }
.vbar-up, .vbar-down { height: 16px; line-height: 16px; flex: none; }
.vbar-thumb { height: 501px; background: #d7d7d7; }
.vbar-down { margin-top: auto; }
.hbar { position: absolute; left: 0; right: 16px; bottom: 0; height: 17px; background: rgba(240,240,240,.6); display: flex; font-size: 8px; line-height: 17px; color: #666; }
.hbar-l { width: 14px; text-align: center; flex: none; }
.hbar-thumb { width: 538px; background: rgba(170,170,170,.55); }
.hbar-r { margin-left: auto; width: 14px; text-align: center; }

/* right card */
.right { width: 720px; margin-left: 20px; padding-left: 21px; }
.chart-head { padding-top: 10px; height: 40px; }
.bar-chart { display: block; width: 260px; height: 270px; margin-left: -11px; overflow: visible; margin-top: -10px; }
.grid-lines path { stroke: #d3d3d3; fill: none; stroke-width: 1; }
.ytext text { font: 13px "Noto Sans", sans-serif; fill: #555; text-anchor: end; }
.axis-name { font-size: 12px; fill: #555; text-anchor: middle; }
.bars rect { fill: #2f5fa9; stroke: #8aa5cf; stroke-width: .5; }
.x-axis { stroke: #333; fill: none; }
.xtext text { font-size: 12px; fill: #555; }
.daily-head { margin-top: 34px; height: 28px; line-height: 26px; }
.pivot-wrap { width: 320px; height: 265px; overflow: hidden; margin-left: -1px; }
.pivot { border-collapse: collapse; table-layout: fixed; width: 312px; font-size: 13.500px; color: #444; }
.p1 { width: 88px; } .p2 { width: 56px; } .p3 { width: 84px; } .p4 { width: 84px; }
.pivot th { height: 27px; background: #f2f2f2; border: 1px solid #e0e0e0; font-weight: 400; text-align: center; white-space: nowrap; overflow: hidden; padding: 0; }
.pivot td { height: 27px; border: 1px solid #e4e4e4; padding: 0 3px; white-space: nowrap; word-spacing: 3px; }
.pivot .pn { text-align: right; padding-right: 4px; }

/* property panel */
.panel {
  position: absolute; left: 1209px; top: 0; width: 461px; height: 730px; background: #333; border-left: 2px solid #8a8a8a;
  color: #eee; font-size: 11px; letter-spacing: -.25px; display: flex; flex-direction: column; white-space: nowrap;
}
.panel-title { height: 24px; flex: none; background: linear-gradient(#6a6a6a, #4f4f4f); display: flex; align-items: center; padding-left: 4px; font-size: 12px; letter-spacing: -.9px; word-spacing: 4px; }
.panel-icons { margin-left: auto; display: flex; align-items: center; gap: 18px; padding-right: 10px; }
.pt { width: 15px; height: 15px; }
.pt.wide { width: 21px; }
.panel-tools { height: 57px; flex: none; padding: 5px 7px 0 5px; background: #333; }
.tools-row { display: flex; align-items: flex-start; gap: 12px; height: 24px; padding-left: 2px; }
.undo { width: 16px; height: 16px; margin-top: 3px; }
.apply { margin-left: auto; width: 49px; height: 25px; background: #fff; border: 1px solid #999; color: #aaa; text-align: center; font-size: 13px; line-height: 23px; }
.search-box { width: 159px; height: 22px; background: #fff; color: #aaa; display: flex; align-items: center; gap: 6px; padding-left: 2px; font-size: 12px; border: 1px solid #ccc; }
.lens { width: 17px; height: 17px; }
.tabs { height: 19px; flex: none; display: flex; padding-left: 4px; font-size: 12px; }
.tab {
  position: relative; isolation: isolate; height: 19px; line-height: 19px; text-align: center; color: #fff; background: #999;
  clip-path: polygon(5px 0, calc(100% - 5px) 0, 100% 100%, 0 100%);
}
.tab::before {
  content: ""; position: absolute; inset: 1px 1px 0 1px; z-index: -1;
  clip-path: polygon(5px 0, calc(100% - 5px) 0, 100% 100%, 0 100%);
}
.tab.active { width: 64px; }
.tab.active::before { background: #454545; }
.tab.other { width: 48px; margin-left: -2px; }
.tab.other::before { background: linear-gradient(#3a3a3a, #000); }
.prop-box { position: relative; width: 451px; height: 625px; margin-left: 4px; border: 1px solid #999; background: #454545; }
.props {
  display: grid; grid-template-columns: 109px 1fr; padding: 5px 0 0 7px; width: 430px;
  grid-template-rows: 28px 28px 23px 27px 22px 23px 22px 54px 28px 180px 26px 28px 28px 35px 28px 34px;
}
.lb { align-self: center; line-height: 13px; }
.lb.up6 { padding-bottom: 6px; }
.lb.up8 { padding-bottom: 8px; }
.lb.up12 { padding-bottom: 12px; }
.lb.top { align-self: start; padding-top: 4px; }
.lb.tight { line-height: 14px; }
.lb.low { padding-top: 6px; }
.val { display: flex; align-items: center; min-width: 0; }
.val.start { align-items: flex-start; }
.in { display: block; width: 300px; height: 22px; background: #fff; color: #123; border: 1px solid #ccc; padding-left: 3px; font-size: 12px; line-height: 20px; }
.sel-btn { width: 50px; height: 26px; background: #fff; border: 1px solid #ccc; color: #123; font-size: 12px; line-height: 24px; text-align: center; }
.ds { margin: 5px 0 0 8px; font-size: 11.500px; line-height: 16px; }
.ck { display: flex; align-items: center; padding-left: 2px; }
.box { width: 12px; height: 12px; background: #fff; border: 2px solid #aaa; margin-right: 2px; flex: none; }
.box.checked { border-width: 1px; margin-left: 9px; font-size: 9px; line-height: 10px; text-align: center; color: #333; margin-right: 3px; }
.alt { width: 309px; }
.alt-in { width: 239px; height: 22px; background: #dcdcdc; margin-left: auto; }
.diff { flex-direction: column; align-items: flex-start; justify-content: flex-start; }
.diff .ck { height: 28px; }
.diff-color { margin-left: 10px; }
.diff-inc { margin-left: 10px; }
.swatch { width: 22px; height: 22px; border: 2px solid #fff; box-shadow: inset 0 0 0 1px #000; margin-left: 9px; position: relative; }
.swatch.blue { background: #00f; }
.swatch.red { background: #f00; }
.swatch::after { content: ""; position: absolute; right: -2px; bottom: -3px; border: 3px solid transparent; border-top: 4px solid #111; }
.dec { height: 26px; }
.select { width: 101px; height: 21px; background: #fff; color: #123; font-size: 13px; line-height: 20px; padding-left: 9px; position: relative; border: 1px solid #ccc; }
.sel-arrow { position: absolute; right: 0; top: 3px; height: 14px; width: 20px; border-left: 1px solid #aaa; }
.sel-arrow::after { content: ""; position: absolute; left: 5px; top: 5px; border: 4px solid transparent; border-top: 5px solid #111; }
.help {
  width: 14px; height: 14px; margin-left: 8px; border-radius: 50%; flex: none; letter-spacing: 0;
  background: radial-gradient(circle at 50% 30%, #5db8ea, #1868ac); color: #fff; font: bold 10px/14px "Liberation Sans", sans-serif; text-align: center;
}
.sel-help { margin-left: 5px; }
.spin + .help { margin-left: 6px; }
.gallery { width: 309px; height: 175px; border: 1px solid #aaa; background: #4b4b4b; display: flex; overflow: hidden; }
.gal-grid { display: grid; grid-template-columns: repeat(6, 43px); grid-auto-rows: 58px; width: 290px; }
.gc { display: flex; flex-direction: column; align-items: center; padding-top: 4px; overflow: hidden; color: #fff; }
.gc svg { width: 30px; height: 30px; flex: none; }
.gc span { display: block; width: 38px; margin-top: 6px; font-size: 11.500px; letter-spacing: -.4px; line-height: 15px; overflow: hidden; white-space: nowrap; text-align: center; }
.gc.sel { background: #82c8fb; }
.gal-bar { width: 17px; margin-left: auto; background: #4f4f4f; display: flex; flex-direction: column; }
.gal-thumb { height: 85px; background: #858585; }
.sb-a { height: 16px; flex: none; font-size: 7px; line-height: 16px; text-align: center; color: #eee; }
.sb-a.end { margin-top: auto; }
.rd { padding: 4px 0 0 2px; font-size: 12px; letter-spacing: 0; }
.rd-up { padding-top: 0; }
.radio {
  width: 14px; height: 14px; border-radius: 50%; margin: 0 6px 0 9px; flex: none;
  background: radial-gradient(circle closest-side, #9a9a9a 0 30%, #444 38% 55%, #aaa 63%);
}
.radio:first-child { margin-left: 0; }
.radio.on { background: radial-gradient(circle closest-side, #eee 0 58%, #a5a5a5 68%); }
.spin-in { width: 48px; height: 22px; background: #fff; border: 1px solid #ccc; color: #123; font-size: 12px; line-height: 20px; padding-left: 4px; }
.spin { width: 18px; height: 22px; display: flex; flex-direction: column; background: #fff; color: #222; font-size: 7px; line-height: 11px; text-align: center; }
.prop-bar { position: absolute; right: 5px; top: 5px; bottom: 5px; width: 16px; background: #4d4d4d; display: flex; flex-direction: column; }
.prop-thumb { height: 521px; background: #6f6f6f; }
.rail {
  position: absolute; left: 1670px; top: 0; width: 27px; height: 730px; background: linear-gradient(90deg, #4b4b4b, #666);
  display: flex; flex-direction: column; align-items: center; gap: 11px; padding: 5px 0 0 5px;
}
.rail svg { width: 20px; height: 20px; flex: none; }

/* bottom bar */
.bottombar {
  height: 34px; flex: none; display: flex; align-items: center; color: #fff; font-size: 11px; white-space: nowrap;
  background: linear-gradient(#3f3f3f, #5c5c5c 45%, #3d3d3d); border-top: 1px solid #aaa;
}
.bb-left { width: 649px; flex: none; display: flex; gap: 26px; padding-left: 16px; height: 100%; align-items: center; }
.bb-btn { display: flex; align-items: center; gap: 5px; }
.bb-btn.first { margin-right: 1px; }
.bb-btn.narrow { letter-spacing: -.7px; }
.bb-btn svg { width: 14px; height: 14px; flex: none; }
.bb-icons { display: flex; border-left: 1px solid #222; padding-left: 4px; height: 100%; }
.bi { width: 32px; height: 33px; display: flex; align-items: center; justify-content: center; flex: none; }
.bi svg { width: 27px; height: 27px; }
.bi.current { background: #808080; }
.abc { font: bold 9px "Liberation Sans", sans-serif; fill: #444; text-anchor: middle; }
.ai-btn {
  margin-left: auto; margin-right: 3px; width: 141px; height: 29px; border: 0; border-radius: 12px; background: #d6e6f5; color: #333;
  display: flex; align-items: center; gap: 5px; padding: 0 0 0 10px; font: 11.500px "Noto Sans CJK JP", sans-serif; letter-spacing: -.5px; font-feature-settings: "palt"; white-space: nowrap;
}
.ai-btn svg { width: 22px; height: 24px; flex: none; }
```
